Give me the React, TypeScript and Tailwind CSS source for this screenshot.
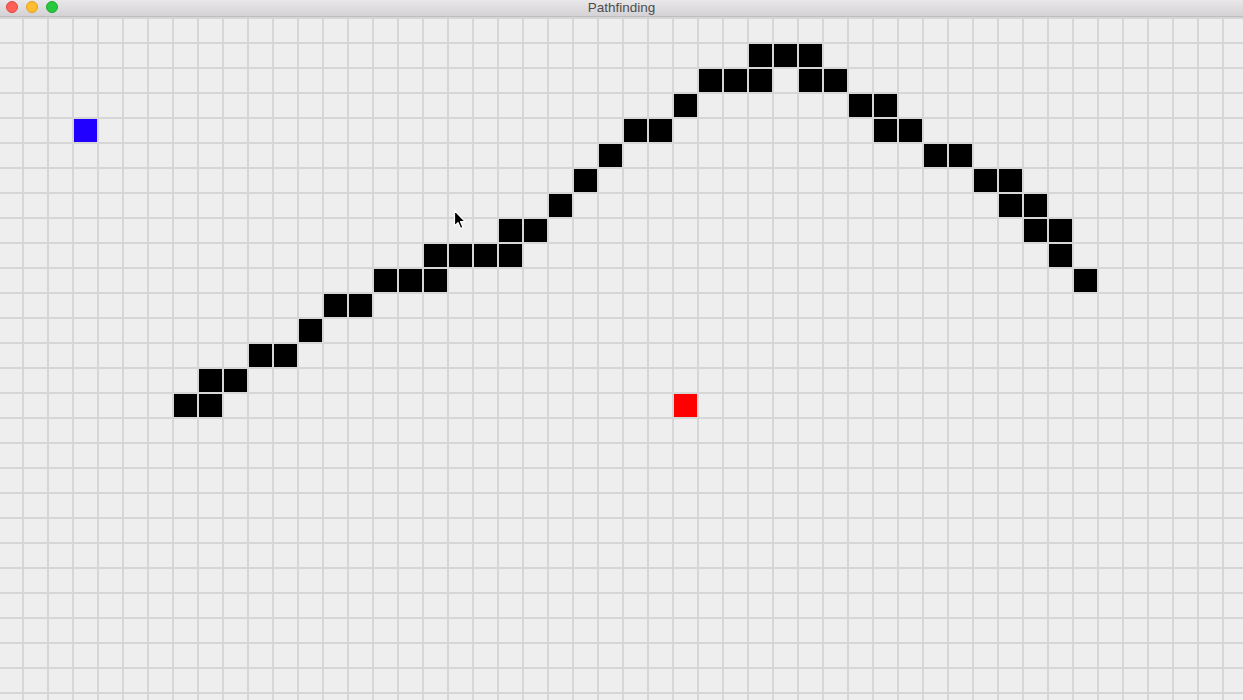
import React from "react";

const COLS = 50;
const ROWS = 29; // row index -1 .. 27

const walls: Record<number, number[]> = {
  1: [30, 31, 32],
  2: [28, 29, 30, 32, 33],
  3: [27, 34, 35],
  4: [25, 26, 35, 36],
  5: [24, 37, 38],
  6: [23, 39, 40],
  7: [22, 40, 41],
  8: [20, 21, 41, 42],
  9: [17, 18, 19, 20, 42],
  10: [15, 16, 17, 43],
  11: [13, 14],
  12: [12],
  13: [10, 11],
  14: [8, 9],
  15: [7, 8],
};

function cellColor(r: number, c: number): string {
  if (r === 4 && c === 3) return "bg-[#2200ff]";
  if (r === 15 && c === 27) return "bg-[#ff0000]";
  if (walls[r] && walls[r].includes(c)) return "bg-black";
  return "bg-[#eeeeee]";
}

export default function App() {
  const cells: React.ReactNode[] = [];
  for (let i = 0; i < ROWS; i++) {
    const r = i - 1;
    for (let c = 0; c < COLS; c++) {
      cells.push(
        <div
          key={`${r}-${c}`}
          className={`w-[25px] h-[25px] border border-[#d6d6d6] ${cellColor(r, c)}`}
        />
      );
    }
  }

  return (
    <div className="relative w-[1243px] h-[700px] overflow-hidden bg-[#eeeeee] flex flex-col" style={{ fontFamily: '"Liberation Sans", Arial, sans-serif' }}>
      <div className="relative h-[17px] shrink-0 bg-gradient-to-b from-[#e9e7e9] to-[#d4d2d4] border-b border-[#bdbdbd] flex items-center justify-center">
        <div className="absolute left-[6px] top-[1px] flex gap-[8px]">
          <div className="w-[12px] h-[12px] rounded-full bg-[#fe5f57] border border-[#e2463f]" />
          <div className="w-[12px] h-[12px] rounded-full bg-[#febc2e] border border-[#dea123]" />
          <div className="w-[12px] h-[12px] rounded-full bg-[#28c840] border border-[#1aab29]" />
        </div>
        <span className="text-[13.5px] leading-none text-[#4d4d4d] -mt-[1px]">Pathfinding</span>
      </div>
      <div className="relative flex-1 overflow-hidden">
        <div className="grid grid-cols-[repeat(50,25px)] mt-[-24px] ml-[-2px] w-[1250px]">
          {cells}
        </div>
      </div>
      <svg className="absolute left-[453px] top-[209px]" width="14" height="22" viewBox="0 0 14 22">
        <path d="M1.5 1.5 L1.5 17 L5 13.6 L7.6 19.5 L10 18.4 L7.5 12.6 L12.2 12.6 Z" fill="#000" stroke="#fff" strokeWidth="1.2" strokeLinejoin="round" />
      </svg>
    </div>
  );
}
